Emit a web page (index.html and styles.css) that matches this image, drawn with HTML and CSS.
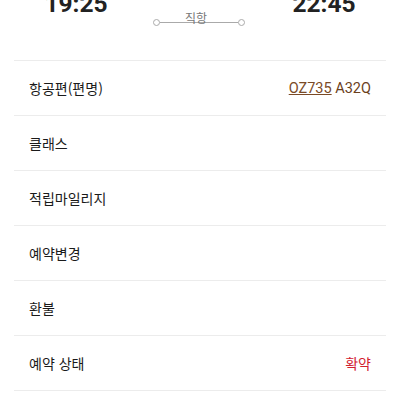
FILE: index.html
```html
<!DOCTYPE html>
<html lang="ko">
<head>
  <meta charset="UTF-8">
  <title>항공편 상세</title>
  <link rel="stylesheet" href="styles.css">
</head>
<body>

  <div class="page">
    <header class="route">
      <div class="time">19:25</div>
      <div class="path">
        <span class="dot"></span>
        <span class="line"></span>
        <span class="dot"></span>
        <span class="path-label">직항</span>
      </div>
      <div class="time">22:45</div>
    </header>

    <ul class="details">
      <li class="row">
        <span class="label">항공편(편명)</span>
        <span class="value flight"><a href="#">OZ735</a> A32Q</span>
      </li>
      <li class="row">
        <span class="label">클래스</span>
      </li>
      <li class="row">
        <span class="label">적립마일리지</span>
      </li>
      <li class="row">
        <span class="label">예약변경</span>
      </li>
      <li class="row">
        <span class="label">환불</span>
      </li>
      <li class="row">
        <span class="label">예약 상태</span>
        <span class="value status">확약</span>
      </li>
    </ul>
  </div>

</body>
</html>
```

FILE: styles.css
```css
body {
  margin: 0;
  background-color: #fff;
  font-family: "Noto Sans CJK KR", "Noto Sans", sans-serif;
  color: #1a1a1a;
}

.page {
  margin: 0 14px;
}

.route {
  display: grid;
  grid-template-columns: 1fr 1fr 1fr;
  height: 60px;
  align-items: start;
}

.time {
  font-family: Roboto, "Liberation Sans", sans-serif;
  font-weight: bold;
  font-size: 24.5px;
  line-height: 26px;
  margin-top: -9px;
  text-align: center;
  color: #222;
}

.path {
  position: relative;
  display: flex;
  align-items: center;
  margin-top: 19px;
  padding: 0 17px 0 15px;
}

.dot {
  width: 5px;
  height: 5px;
  border: 1px solid #aaa;
  border-radius: 50%;
  background-color: #fff;
  flex: none;
}

.line {
  flex: 1;
  height: 1px;
  background-color: #aaa;
}

.path-label {
  position: absolute;
  left: 0;
  right: 0;
  top: -8px;
  text-align: center;
  font-size: 12px;
  line-height: 14px;
  color: #777;
  margin-left: -8px;
}

.details {
  list-style: none;
  margin: 0;
  padding: 0;
}

.row {
  display: flex;
  justify-content: space-between;
  align-items: center;
  height: 54px;
  padding: 0 15px;
  border-top: 1px solid #ececec;
  font-size: 14px;
}

.row:last-child {
  border-bottom: 1px solid #ececec;
}

.value {
  font-family: Roboto, "Noto Sans CJK KR", sans-serif;
}

.flight {
  color: #6b3f1d;
  font-size: 14.5px;
}

.flight a {
  color: #7a4a26;
}

.status {
  color: #d2202f;
  font-family: "Noto Sans CJK KR", sans-serif;
}
```
